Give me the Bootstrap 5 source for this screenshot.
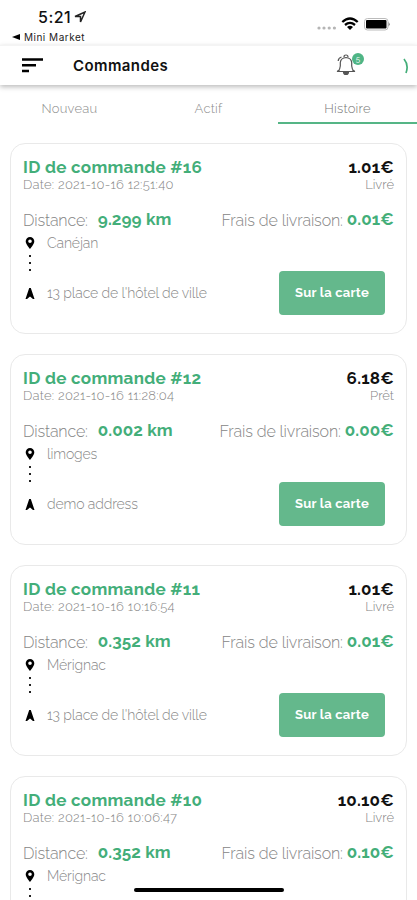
<!DOCTYPE html>
<html lang="fr">
<head>
<meta charset="utf-8">
<meta name="viewport" content="width=device-width, initial-scale=1">
<title>Commandes</title>
<link href="https://cdn.jsdelivr.net/npm/bootstrap@5.3.0/dist/css/bootstrap.min.css" rel="stylesheet">
<style>
:root{--brand:#43ae79}
html,body{height:100%}
body{font-family:Raleway,Lato,sans-serif;background:#fff;color:#111;overflow:hidden;line-height:1.2}
svg{display:block;flex:none}
.screen{height:900px;overflow:hidden}
.status{height:45px;padding:8px 27px 0 12px;font-family:Inter,sans-serif}
.clock{font-size:16px;font-weight:500;line-height:18px;padding-left:26px;letter-spacing:.5px}
.clock svg{margin-left:3px}
.back-app{font-size:10px;line-height:12px;letter-spacing:.5px;margin-top:5px;color:#222}
.appbar{height:40px;padding:0 8px 0 22px;border-top:1px solid #f4f4f4;box-shadow:0 2px 5px rgba(0,0,0,.27);position:relative}
.title{font:600 15px/20px Inter,sans-serif;margin-left:30px;letter-spacing:.4px}
.bell{position:relative;width:28px;height:26px;margin-right:39px}
.count{position:absolute;left:16px;top:0;width:12px;height:12px;font-size:8px;line-height:12px;background:#4fb585;color:#fff}
.tabs{height:39px}
.tabs .nav-link{padding:5px 0 0;height:39px;font-size:13px;line-height:37px;color:#8b8b8b;font-weight:300;border-radius:0;letter-spacing:.25px}
.tabs .nav-link.active{color:#777;border-bottom:2px solid #55b586;line-height:38px}
.orders{padding:19px 10px 0;gap:20px}
.order{height:191px;flex:none;border:1px solid #e9e9e9;border-radius:15px;padding:13px 12px 0}
.oid{font-size:17px;line-height:20px;font-weight:700;color:var(--brand);letter-spacing:.28px}
.price{font-size:17px;line-height:20px;font-weight:700;letter-spacing:.2px;color:#111}
.meta{font-size:13px;line-height:16px;color:#848484;font-weight:300}
.date{letter-spacing:.27px}
.facts{margin-top:16px;height:23px;font-size:16px;line-height:23px;font-weight:300;color:#858585}
.facts strong{font-weight:700;color:var(--brand);font-size:17px;line-height:21px;letter-spacing:.1px}
.facts .dist-label{letter-spacing:-.15px}
.facts .fee-label{letter-spacing:-.12px}
.km{margin-left:10px}
.route{margin-top:1px;font-size:14px;line-height:20px;color:#888;font-weight:300;letter-spacing:-.13px}
.route .pin{width:14px;margin-right:10px}
.map-btn{width:106px;height:44px;margin:39px 9px 0 0;border:0;border-radius:4px;background:#64b88c;color:#fff;font-size:13px;font-weight:700;padding:0;letter-spacing:.25px}
.dots{height:17px;margin:1px 0 0 5px}
.home-bar{position:absolute;left:134px;top:888px;width:150px;height:4px;background:#000;border-radius:2px}
</style>
<script src="https://cdn.jsdelivr.net/npm/bootstrap@5.3.0/dist/js/bootstrap.bundle.min.js"></script>
</head>
<body>
<div class="screen position-relative d-flex flex-column">
<header class="status d-flex justify-content-between flex-shrink-0">
<div>
<div class="clock d-flex align-items-center">5:21
<svg width="12" height="12" viewBox="0 0 12 12"><path d="M1 5.500 11 1 6.500 11V5.500Z" fill="none" stroke="#222" stroke-width="1.500"/></svg></div>
<div class="back-app d-flex align-items-center"><svg width="8" height="6" viewBox="0 0 8 6"><path d="M0 3 8 0v6Z"/></svg><span class="ms-1">Mini Market</span></div>
</div>
<div class="d-flex align-items-start">
<svg width="74" height="28" viewBox="0 0 74 28"><g fill="#b5b5b5"><circle cx="3" cy="20" r="1.600"/><circle cx="8" cy="20" r="1.600"/><circle cx="13.200" cy="20" r="1.600"/><circle cx="18.400" cy="20" r="1.600"/></g>
<g fill="none" stroke="#000" stroke-width="2.300"><path d="M26.300 14Q34 7 41.700 14"/><path d="M29 17Q34 12.800 39 17"/></g><path d="M31 19Q34 16.500 37 19L34 22Z"/>
<rect x="48.500" y="10.500" width="23.500" height="11.500" rx="3" fill="#fff" stroke="#bbb"/><rect x="50" y="12" width="20.500" height="8.500" rx="1"/><path d="M72.500 14v4.500q2.500-2.200 0-4.500" fill="#888"/></svg>
</div>
</header>
<nav class="appbar d-flex align-items-center flex-shrink-0">
<svg width="21" height="15" viewBox="0 0 21 15"><path d="M0 1.500h21M0 7.300h14M0 13h7" stroke="#000" stroke-width="2.500"/></svg>
<div class="title">Commandes</div>
<div class="bell ms-auto"><svg width="20" height="24" viewBox="0 0 20 24"><g fill="none" stroke="#555" stroke-width="1.200"><path d="M2 18.500q2-2 2.300-5.500V9.500q.5-4.500 5.700-5 5.200.5 5.700 5V13q.3 3.500 2.300 5.500Z"/><path d="M8 4q0-2 2-2t2 2M2.200 8Q2.300 5 5.500 4M7.500 19q0 2.500 2.500 2.500t2.500-2.500"/></g><path d="M7.500 19h5l-1 2.500h-3ZM1 17.500h3V19H1ZM16 17.500h3V19h-3Z" fill="#555"/></svg>
<span class="count rounded-circle text-center">5</span></div>
<svg width="6" height="16" viewBox="0 0 6 16"><path d="M1 1Q6 7 3 15" fill="none" stroke="#43ae79" stroke-width="1.700"/></svg>
</nav>
<ul class="nav nav-fill tabs flex-shrink-0">
<li class="nav-item col-4"><a class="nav-link">Nouveau</a></li>
<li class="nav-item col-4"><a class="nav-link">Actif</a></li>
<li class="nav-item col-4"><a class="nav-link active">Histoire</a></li>
</ul>
<main class="orders d-flex flex-column" id="orders"></main>
<div class="home-bar"></div>
</div>
<template id="orderTpl">
<article class="order">
<div class="d-flex justify-content-between"><span class="oid"></span><span class="price"></span></div>
<div class="d-flex justify-content-between meta"><span class="date"></span><span class="state"></span></div>
<div class="facts d-flex justify-content-between"><span class="d-flex align-items-start"><span class="dist-label">Distance:</span><strong class="km"></strong></span><span class="d-flex align-items-start"><span class="fee-label">Frais de livraison:</span><strong class="fee ms-1"></strong></span></div>
<div class="d-flex justify-content-between align-items-start">
<div class="route">
<div class="d-flex align-items-center"><span class="pin"><svg class="mx-auto" width="10" height="12" viewBox="0 0 10 12"><path fill-rule="evenodd" d="M5 0a4.300 4.300 0 0 1 4.300 4.300C9.300 7.500 5 12 5 12S.7 7.500.7 4.300A4.300 4.300 0 0 1 5 0Zm0 2.500a1.800 1.800 0 1 0 0 3.600 1.800 1.800 0 0 0 0-3.600Z"/></svg></span><span class="from"></span></div>
<svg class="dots" width="4" height="17" viewBox="0 0 4 17"><path d="M1 2h2M1 9h2M1 16h2" stroke="#222" stroke-width="2"/></svg>
<div class="d-flex align-items-center mt-2 pt-1"><span class="pin"><svg class="mx-auto" width="10" height="11" viewBox="0 0 10 11"><path d="M4.200 0h1.600L9.500 11H8L5 8.500 2 11H.5Z"/></svg></span><span class="to"></span></div>
</div>
<button class="btn map-btn">Sur la carte</button>
</div>
</article>
</template>
<script>
const orders=[
{oid:"ID de commande #16",price:"1.01€",date:"Date: 2021-10-16 12:51:40",state:"Livré",km:"9.299 km",fee:"0.01€",from:"Canéjan",to:"13 place de l'hôtel de ville"},
{oid:"ID de commande #12",price:"6.18€",date:"Date: 2021-10-16 11:28:04",state:"Prêt",km:"0.002 km",fee:"0.00€",from:"limoges",to:"demo address"},
{oid:"ID de commande #11",price:"1.01€",date:"Date: 2021-10-16 10:16:54",state:"Livré",km:"0.352 km",fee:"0.01€",from:"Mérignac",to:"13 place de l'hôtel de ville"},
{oid:"ID de commande #10",price:"10.10€",date:"Date: 2021-10-16 10:06:47",state:"Livré",km:"0.352 km",fee:"0.10€",from:"Mérignac",to:"13 place de l'hôtel de ville"}];
const tpl=document.getElementById("orderTpl");
for(const o of orders){const c=tpl.content.cloneNode(true);for(const k in o)c.querySelector("."+k).textContent=o[k];document.getElementById("orders").append(c);}
</script>
</body>
</html>
